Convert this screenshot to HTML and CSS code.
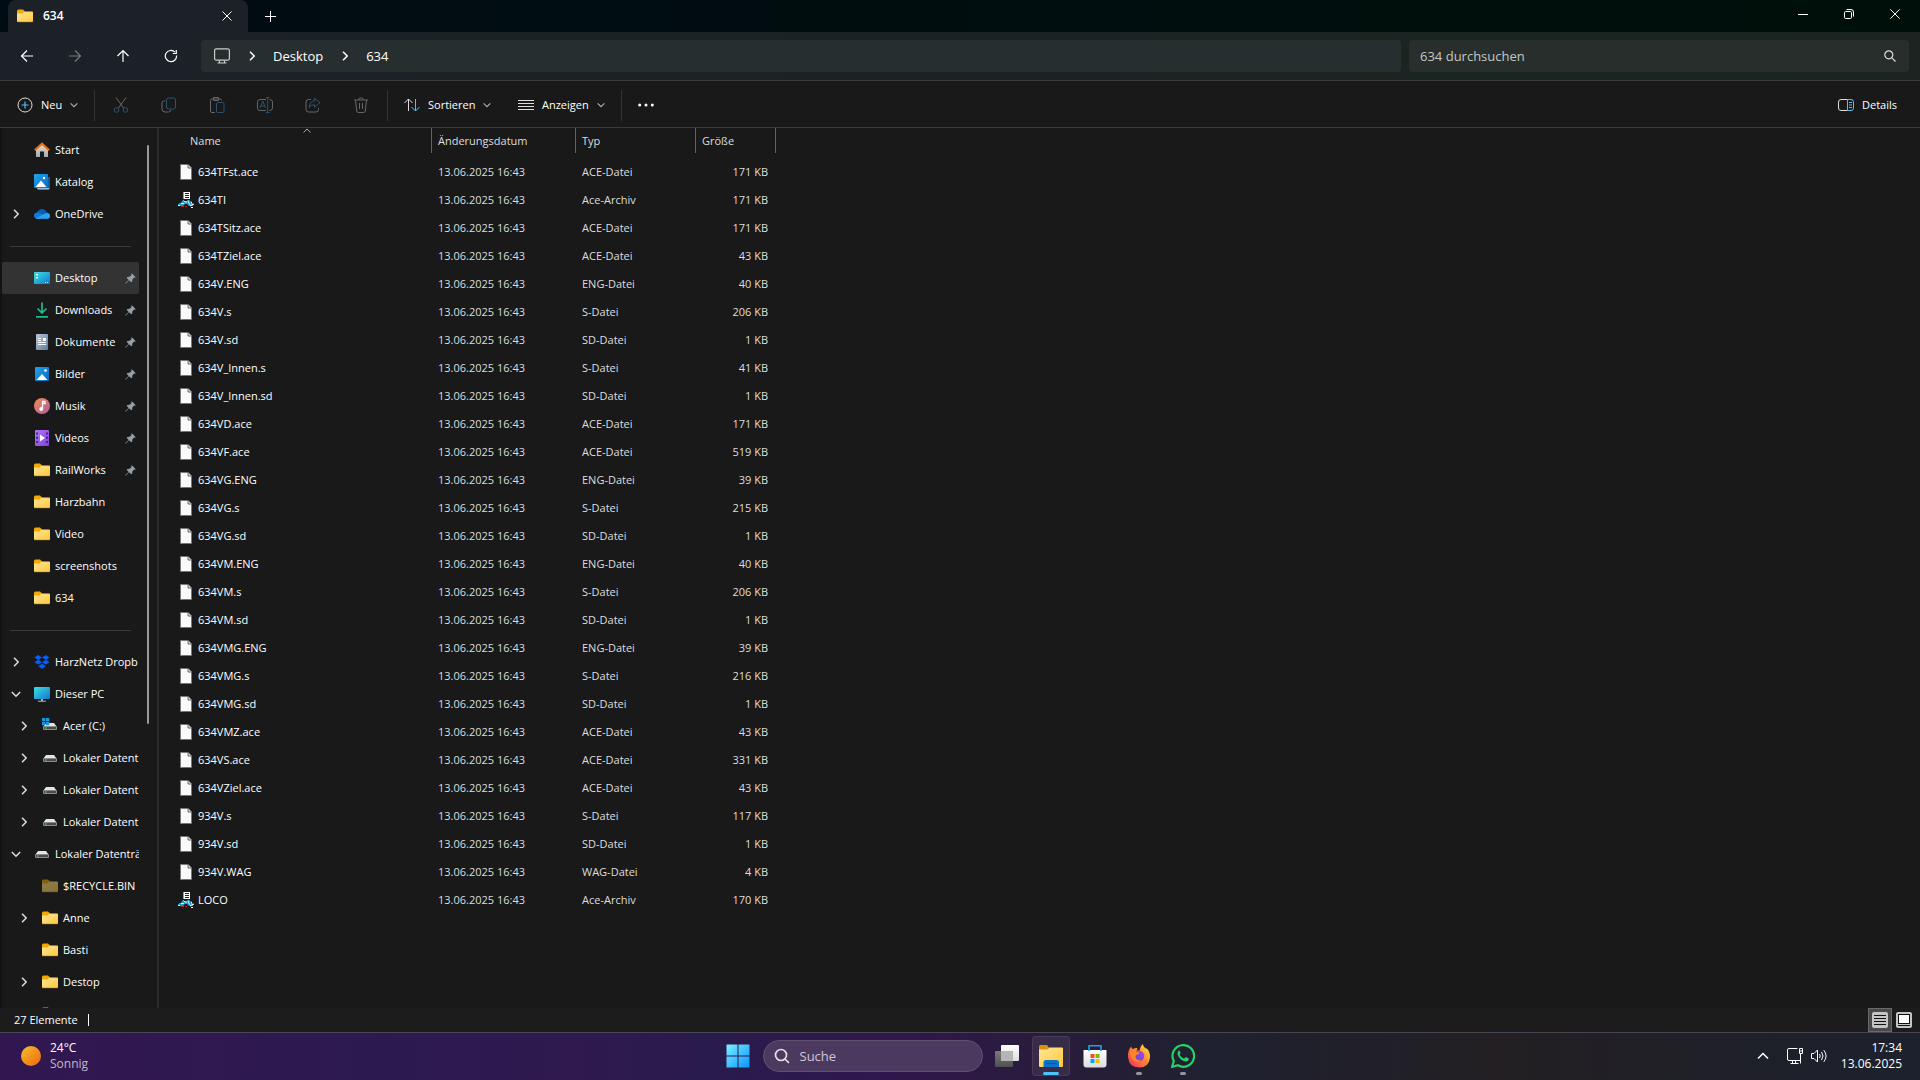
FILE: index.html
```html
<!DOCTYPE html>
<html lang="de">
<head>
<meta charset="UTF-8">
<title>634</title>
<link rel="stylesheet" href="styles.css">
</head>
<body>
<svg class="sprite" aria-hidden="true">
	<defs>
		<linearGradient id="gFolder" x1="0" y1="0" x2="1" y2="1"><stop offset="0" stop-color="#ffe69a"/><stop offset="1" stop-color="#ffc83a"/></linearGradient>
		<linearGradient id="gBlue" x1="0" y1="0" x2="1" y2="1"><stop offset="0" stop-color="#1fa5ee"/><stop offset="1" stop-color="#0a67bd"/></linearGradient>
		<linearGradient id="gCyan" x1="0" y1="0" x2="1" y2="1"><stop offset="0" stop-color="#3be0e8"/><stop offset="1" stop-color="#1277c9"/></linearGradient>
		<linearGradient id="gHouse" x1="0" y1="0" x2="0" y2="1"><stop offset="0" stop-color="#dedede"/><stop offset="1" stop-color="#a9a9a9"/></linearGradient>
		<linearGradient id="gDoc" x1="0" y1="0" x2="1" y2="1"><stop offset="0" stop-color="#b4c8dc"/><stop offset="1" stop-color="#5f7b9b"/></linearGradient>
		<linearGradient id="gMusic" x1="0" y1="0" x2="1" y2="1"><stop offset="0" stop-color="#f28d52"/><stop offset="1" stop-color="#b05aa0"/></linearGradient>
		<linearGradient id="gVideo" x1="0" y1="0" x2="1" y2="1"><stop offset="0" stop-color="#b477f5"/><stop offset="1" stop-color="#8141dd"/></linearGradient>
		<linearGradient id="gWin" x1="0" y1="0" x2="1" y2="1"><stop offset="0" stop-color="#7cf0ff"/><stop offset="1" stop-color="#0a93ff"/></linearGradient>
		<linearGradient id="gSun" x1="0" y1="0" x2="1" y2="1"><stop offset="0" stop-color="#f6c02f"/><stop offset="1" stop-color="#f0640c"/></linearGradient>
		<linearGradient id="gFox" x1="1" y1="0" x2="0" y2="1"><stop offset="0" stop-color="#fff04a"/><stop offset=".45" stop-color="#ff8a2c"/><stop offset="1" stop-color="#f0246c"/></linearGradient>
		<linearGradient id="gGlobe" x1="1" y1="0" x2="0" y2="1"><stop offset="0" stop-color="#b145f0"/><stop offset="1" stop-color="#5747c7"/></linearGradient>
		<linearGradient id="gWhite" x1="0" y1="0" x2="0" y2="1"><stop offset="0" stop-color="#ffffff"/><stop offset="1" stop-color="#dcdcdc"/></linearGradient>
		<linearGradient id="gGrey" x1="0" y1="0" x2="0" y2="1"><stop offset="0" stop-color="#7a7a7a"/><stop offset="1" stop-color="#505050"/></linearGradient>
	</defs>
	<symbol id="folder" viewBox="0 0 16 16"><path d="M0 3Q0 1.500 1.500 1.500H6L8 3.500V7H0z" fill="#f3a805"/><path d="M0 5.500h5.500L7.500 3.500H15q1 0 1 1V13q0 1-1 1H1q-1 0-1-1z" fill="url(#gFolder)"/><path d="M.5 13.700h15" stroke="#e5a92a" stroke-width=".8"/></symbol>
	<symbol id="file" viewBox="0 0 12 16"><path d="M.5.5H8L11.500 4V15.500H.5z" fill="#fafafa" stroke="#777" /><path d="M8 .5V4h3.500" fill="#ddd" stroke="#666"/></symbol>
	<symbol id="ace" viewBox="0 0 16 16"><path d="M6 0h6v7H6z" fill="#fff"/><path d="M5.500 0v7" stroke="#99a"/><path d="M7 1.500h4M7 3.500h4M7 5.500h4M7 7.500h1.500M10 7.500h1.500" stroke="#0b0bd8"/><path d="M5 8L2.500 11H1v1H0v2h5l2-2h2l2 2h4v-2h-1.500L11.500 8H9.500v1h-3z" fill="#1a9fd0"/><path d="M5.500 8.500l1.500 1.500h2M3 11.500h3M0 13.500h2M10 8.500l1.500 4" stroke="#d4f4ff" fill="none"/><path d="M3 14.500h3M7 14.500h2" stroke="#c11"/><path d="M13 9.500l1.500 3.500M12 14l4-2M13 15.500h2" stroke="#fff"/></symbol>
	<symbol id="home" viewBox="0 0 16 16"><path d="M2 7l6-5 6 5v8H10V9.500H6V15H2z" fill="url(#gHouse)"/><path d="M.8 8.300L8 1.700l7.200 6.600" fill="none" stroke="#e8700f" stroke-width="2.200"/></symbol>
	<symbol id="gallery" viewBox="0 0 16 16"><path d="M3 3h13v11q0 1.500-1.500 1.500H3z" fill="#0c59a4"/><path d="M3 14h12.500q-.5 1.500-1.500 1.500H4z" fill="#8fc0ee"/><rect width="14" height="14" rx="1" fill="url(#gBlue)"/><path d="M1.500 13L7 6.500 12.500 13z" fill="#fff"/><circle cx="10" cy="4" r="1.200" fill="#fff"/></symbol>
	<symbol id="picture" viewBox="0 0 16 16"><rect x="1" y="1" width="14" height="14" rx="1" fill="url(#gBlue)"/><path d="M2.500 14L8 8l5.500 6z" fill="#fff"/><circle cx="11.500" cy="4.500" r="1.300" fill="#fff"/></symbol>
	<symbol id="cloud" viewBox="0 0 16 16"><path d="M4 12.800Q0 12.500 0 9.500 0 7 3 6.500 4.500 3 8 3q3.500 0 5 3.500Q16 7 16 9.800q0 3-3 3z" fill="#0a5bb8"/><path d="M3 6.500Q5 6.200 7 7.500l6 3.300L3 12.700Q0 12 0 9.500 0 7 3 6.500z" fill="#1479d6"/><path d="M2 12.300L9 8.500q2-1.500 4.500-1.500Q16 7.500 16 9.800q0 3-3 3H4q-1.500 0-2-.5z" fill="#29a4ef"/></symbol>
	<symbol id="desktop" viewBox="0 0 16 16"><rect y="2" width="16" height="12" rx="1" fill="url(#gCyan)"/><path d="M2 4h2v1.500H2zM2 7h2v1.500H2z" fill="#fff"/><path d="M11 12.500h1M13 12.500h1" stroke="#bdf"/></symbol>
	<symbol id="download" viewBox="0 0 16 16"><path d="M8 .5v10M3.500 6.500L8 11l4.500-4.500M2 14.800h12" fill="none" stroke="#22b88d" stroke-width="1.700"/></symbol>
	<symbol id="document" viewBox="0 0 16 16"><rect x="2" width="12" height="16" rx="1" fill="url(#gDoc)"/><path d="M4 4.500h3M4 6.500h3M4 8.500h8M4 10.500h8" stroke="#fff"/><path d="M9 4h3v3H9z" fill="#fff"/></symbol>
	<symbol id="music" viewBox="0 0 16 16"><circle cx="8" cy="8" r="8" fill="url(#gMusic)"/><path d="M8.500 11V3.500h2.500v2H9" fill="none" stroke="#fff" stroke-width="1.300"/><circle cx="7.200" cy="11" r="1.900" fill="#fff"/></symbol>
	<symbol id="video" viewBox="0 0 16 16"><rect x="1" width="14" height="16" rx="1" fill="url(#gVideo)"/><path d="M3 2.500v12M13 2.500v12" stroke="#3d1f7a" stroke-width="1.800" stroke-dasharray="2 2.300"/><path d="M6 4.500v7L11 8z" fill="#fff"/></symbol>
	<symbol id="dropbox" viewBox="0 0 16 16"><path d="M4.200 1L8 3.400 4.200 5.800.4 3.400zM11.800 1l3.800 2.400-3.800 2.400L8 3.400zM4.200 5.800L8 8.200l-3.800 2.400L.4 8.200zM11.800 5.800l3.800 2.400-3.800 2.400L8 8.200zM8 9.800l3.800 2.400L8 14.800l-3.800-2.600z" fill="#0061fe"/></symbol>
	<symbol id="pc" viewBox="0 0 16 16"><rect y="1" width="16" height="12" rx="1" fill="url(#gCyan)"/><path d="M7 13h2v2H7zM4 14.700h8v1H4z" fill="#9fb4c4"/></symbol>
	<symbol id="drive" viewBox="0 0 16 16"><path d="M4 5h8l2.500 3.500h-13z" fill="#e4e4e4"/><rect x="1" y="8" width="14" height="4" rx="1" fill="#8b8b8b"/><path d="M2 9h12v2H2z" fill="#4a4a4a"/><circle cx="4" cy="10" r=".8" fill="#4be04b"/></symbol>
	<symbol id="windrive" viewBox="0 0 16 16"><path d="M4 5h8l2.500 3.500h-13z" fill="#e4e4e4"/><rect x="1" y="8" width="14" height="4" rx="1" fill="#8b8b8b"/><path d="M2 9h12v2H2z" fill="#4a4a4a"/><circle cx="4" cy="10" r=".8" fill="#4be04b"/><path d="M0 0h3.300v3.300H0zM4 0h3.300v3.300H4zM0 4h3.300v3.300H0zM4 4h3.300v3.300H4z" fill="#1696dd"/></symbol>
	<symbol id="pin" viewBox="0 0 12 12"><path d="M7.500.3L11.700 4.500 10.700 5.200 9.800 5 8 7.300 7.700 9.600 6.800 10.200 4.400 7.800 1 11.500.3 11.800.5 11 4 7.500 1.800 5.200 2.500 4.400 5 4.200 7.100 2.300 6.800 1.200z" fill="#969fa8"/></symbol>
	<symbol id="right" viewBox="0 0 10 10"><path d="M3 .8L7.200 5 3 9.200" fill="none" stroke="currentColor" stroke-width="1.500"/></symbol>
	<symbol id="down" viewBox="0 0 10 10"><path d="M.8 3L5 7.200 9.200 3" fill="none" stroke="currentColor" stroke-width="1.500"/></symbol>
</svg>

<header class="titlebar">
	<div class="tab">
		<svg class="ico"><use href="#folder"/></svg>
		<span class="tab-name">634</span>
		<button class="tab-close" aria-label="Tab schließen"><svg width="10" height="10" viewBox="0 0 10 10"><path d="M.5.5l9 9M9.500.5l-9 9" stroke="#fff"/></svg></button>
	</div>
	<button class="new-tab" aria-label="Neuer Tab"><svg width="11" height="11" viewBox="0 0 11 11"><path d="M5.500 0v11M0 5.500h11" stroke="#fff"/></svg></button>
	<div class="win-btns">
		<button aria-label="Minimieren"><svg width="10" height="10" viewBox="0 0 10 10"><path d="M0 5.500h10" stroke="#fff"/></svg></button>
		<button aria-label="Verkleinern"><svg width="10" height="10" viewBox="0 0 10 10" fill="none" stroke="#fff"><rect x=".5" y="2.500" width="7" height="7" rx="1.200"/><path d="M2.500.5H7q2.500 0 2.500 2.500v4.500"/></svg></button>
		<button aria-label="Schließen"><svg width="10" height="10" viewBox="0 0 10 10"><path d="M.3.3l9.400 9.400M9.700.3L.3 9.700" stroke="#fff"/></svg></button>
	</div>
</header>

<nav class="navbar">
	<div class="nav-btns">
		<button aria-label="Zurück"><svg width="14" height="14" viewBox="0 0 14 14"><path d="M13 7H1.500M7 1.500L1.500 7 7 12.500"/></svg></button>
		<button aria-label="Vorwärts" disabled><svg width="14" height="14" viewBox="0 0 14 14"><path d="M1 7h11.500M7 1.500L12.500 7 7 12.500"/></svg></button>
		<button aria-label="Nach oben"><svg width="14" height="14" viewBox="0 0 14 14"><path d="M7 13V1.500M1.500 7L7 1.500 12.500 7"/></svg></button>
		<button aria-label="Aktualisieren"><svg width="14" height="14" viewBox="0 0 14 14"><path d="M12.500 6.500A5.600 5.600 0 1 1 11 3.200M12.300 1v3.500H8.800"/></svg></button>
	</div>
	<div class="address">
		<svg width="16" height="16" viewBox="0 0 16 16" fill="none" stroke="#ccc" stroke-width="1.200"><rect x=".6" y=".8" width="14.800" height="11.400" rx="1.800"/><path d="M5.500 12.500v2M10.500 12.500v2M3.500 15h9"/></svg>
		<svg class="chev"><use href="#right"/></svg>
		<a href="#">Desktop</a>
		<svg class="chev"><use href="#right"/></svg>
		<a href="#">634</a>
	</div>
	<div class="search">
		<input type="text" placeholder="634 durchsuchen" aria-label="634 durchsuchen">
		<svg width="12" height="12" viewBox="0 0 12 12" fill="none" stroke="#ddd" stroke-width="1.200"><circle cx="4.800" cy="4.800" r="4"/><path d="M7.700 7.700l3.800 3.800"/></svg>
	</div>
</nav>

<div class="toolbar">
	<button class="tool tool-new"><svg width="16" height="16" viewBox="0 0 16 16" fill="none"><circle cx="8" cy="8" r="7" stroke="#ddd"/><path d="M8 4.500v7M4.500 8h7" stroke="#4cc2ff" stroke-width="1.200"/></svg>Neu<svg class="mini"><use href="#down"/></svg></button>
	<span class="divider"></span>
	<div class="edit-btns">
		<button aria-label="Ausschneiden" disabled><svg viewBox="0 0 16 16"><path d="M3 .5l7.500 10.500M13 .5L5.500 11" stroke="#666"/><circle cx="3.500" cy="13" r="2.300" stroke="#2a5570"/><circle cx="12.500" cy="13" r="2.300" stroke="#2a5570"/></svg></button>
		<button aria-label="Kopieren" disabled><svg viewBox="0 0 16 16"><path d="M4 4H2.500Q1 4 1 6v6q0 3 3 3h3.500q2 0 2.500-2" stroke="#666"/><rect x="5.500" y="1" width="9" height="11" rx="2" stroke="#2a5570"/></svg></button>
		<button aria-label="Einfügen" disabled><svg viewBox="0 0 16 16"><path d="M6 15.500H3Q1.500 15.500 1.500 14V3.500Q1.500 2 3 2h8q1.500 0 1.500 1.500M4.500.5h5v3h-5z" stroke="#666"/><rect x="7.500" y="5.500" width="7.500" height="10" rx="1.200" stroke="#2a5570"/></svg></button>
		<button aria-label="Umbenennen" disabled><svg viewBox="0 0 16 16"><path d="M9 2.500H3Q.5 2.500.5 5v6q0 2.500 2.500 2.500h6M12.500 2.500q3 0 3 2.500v6q0 2.500-3 2.500" stroke="#666"/><path d="M3 11l2.800-7 2.700 7M4 9h3.600M9 .5h3.500M9 15.500h3.500M10.700.5v15" stroke="#2a5570"/></svg></button>
		<button aria-label="Freigeben" disabled><svg viewBox="0 0 16 16"><path d="M6 2.500H3.500Q1 2.500 1 5v7.500Q1 15 3.500 15H11q2.500 0 2.500-2.500V11" stroke="#666"/><path d="M9.500 1.200L15 5.700 9.500 10.200V7.700Q6 7.500 4 10.500 4.500 4.500 9.500 3.700z" stroke="#2a5570"/></svg></button>
		<button aria-label="Löschen" disabled><svg viewBox="0 0 16 16"><path d="M1 3h14M5.500 3Q5.500.8 8 .8T10.500 3M2.500 3l1.200 11q.2 1.500 1.500 1.500h5.600q1.300 0 1.500-1.500l1.200-11M6.500 6v6M9.500 6v6" stroke="#666"/></svg></button>
	</div>
	<span class="divider"></span>
	<button class="tool tool-sort"><svg width="16" height="16" viewBox="0 0 16 16" fill="none"><path d="M4.500 14V2M.5 6l4-4 4 4" stroke="#ddd"/><path d="M11.500 2v12M7.500 10l4 4 4-4" stroke="#4cc2ff"/></svg>Sortieren<svg class="mini"><use href="#down"/></svg></button>
	<button class="tool tool-view"><svg width="16" height="16" viewBox="0 0 16 16"><path d="M0 3.500h16M0 6.500h16M0 9.500h16M0 12.500h16" stroke="#ddd"/></svg>Anzeigen<svg class="mini"><use href="#down"/></svg></button>
	<span class="divider"></span>
	<button class="tool tool-more" aria-label="Mehr anzeigen"><svg width="16" height="16" viewBox="0 0 16 16" fill="#fff"><circle cx="1.700" cy="8" r="1.500"/><circle cx="8" cy="8" r="1.500"/><circle cx="14.300" cy="8" r="1.500"/></svg></button>
	<button class="tool tool-details"><svg width="16" height="16" viewBox="0 0 16 16" fill="none"><path d="M9.500 2.500H3Q.5 2.500.5 5v6q0 2.500 2.500 2.500h6.500" stroke="#ddd"/><path d="M9.500 2.500H13q2.500 0 2.500 2.500v6q0 2.500-2.500 2.500H9.500zM11 5.500h3M11 8h3M11 10.500h3" stroke="#4cc2ff"/></svg>Details</button>
</div>

<main class="content">
	<aside class="sidebar">
		<ul class="tree">
			<li><a href="#"><svg class="ico"><use href="#home"/></svg>Start</a></li>
			<li><a href="#"><svg class="ico"><use href="#gallery"/></svg>Katalog</a></li>
			<li><button aria-label="Erweitern"><svg><use href="#right"/></svg></button><a href="#"><svg class="ico"><use href="#cloud"/></svg>OneDrive</a></li>
			<li class="line"></li>
			<li class="on"><a href="#"><svg class="ico"><use href="#desktop"/></svg>Desktop</a><svg class="pin"><use href="#pin"/></svg></li>
			<li><a href="#"><svg class="ico"><use href="#download"/></svg>Downloads</a><svg class="pin"><use href="#pin"/></svg></li>
			<li><a href="#"><svg class="ico"><use href="#document"/></svg>Dokumente</a><svg class="pin"><use href="#pin"/></svg></li>
			<li><a href="#"><svg class="ico"><use href="#picture"/></svg>Bilder</a><svg class="pin"><use href="#pin"/></svg></li>
			<li><a href="#"><svg class="ico"><use href="#music"/></svg>Musik</a><svg class="pin"><use href="#pin"/></svg></li>
			<li><a href="#"><svg class="ico"><use href="#video"/></svg>Videos</a><svg class="pin"><use href="#pin"/></svg></li>
			<li><a href="#"><svg class="ico"><use href="#folder"/></svg>RailWorks</a><svg class="pin"><use href="#pin"/></svg></li>
			<li><a href="#"><svg class="ico"><use href="#folder"/></svg>Harzbahn</a></li>
			<li><a href="#"><svg class="ico"><use href="#folder"/></svg>Video</a></li>
			<li><a href="#"><svg class="ico"><use href="#folder"/></svg>screenshots</a></li>
			<li><a href="#"><svg class="ico"><use href="#folder"/></svg>634</a></li>
			<li class="line"></li>
			<li><button aria-label="Erweitern"><svg><use href="#right"/></svg></button><a href="#"><svg class="ico"><use href="#dropbox"/></svg>HarzNetz Dropb</a></li>
			<li><button aria-label="Reduzieren"><svg><use href="#down"/></svg></button><a href="#"><svg class="ico"><use href="#pc"/></svg>Dieser PC</a></li>
			<li class="sub"><button aria-label="Erweitern"><svg><use href="#right"/></svg></button><a href="#"><svg class="ico"><use href="#windrive"/></svg>Acer (C:)</a></li>
			<li class="sub"><button aria-label="Erweitern"><svg><use href="#right"/></svg></button><a href="#"><svg class="ico"><use href="#drive"/></svg>Lokaler Datent</a></li>
			<li class="sub"><button aria-label="Erweitern"><svg><use href="#right"/></svg></button><a href="#"><svg class="ico"><use href="#drive"/></svg>Lokaler Datent</a></li>
			<li class="sub"><button aria-label="Erweitern"><svg><use href="#right"/></svg></button><a href="#"><svg class="ico"><use href="#drive"/></svg>Lokaler Datent</a></li>
			<li><button aria-label="Reduzieren"><svg><use href="#down"/></svg></button><a href="#"><svg class="ico"><use href="#drive"/></svg>Lokaler Datenträ</a></li>
			<li class="sub"><a href="#"><svg class="ico dim"><use href="#folder"/></svg>$RECYCLE.BIN</a></li>
			<li class="sub"><button aria-label="Erweitern"><svg><use href="#right"/></svg></button><a href="#"><svg class="ico"><use href="#folder"/></svg>Anne</a></li>
			<li class="sub"><a href="#"><svg class="ico"><use href="#folder"/></svg>Basti</a></li>
			<li class="sub"><button aria-label="Erweitern"><svg><use href="#right"/></svg></button><a href="#"><svg class="ico"><use href="#folder"/></svg>Destop</a></li>
			<li class="sub"><a href="#" aria-label="Ordner"><svg class="ico"><use href="#folder"/></svg></a></li>
		</ul>
		<div class="scroll"><div class="thumb"></div></div>
	</aside>

	<section class="files">
		<table>
			<colgroup><col class="c-name"><col class="c-date"><col class="c-type"><col class="c-size"></colgroup>
			<thead>
				<tr>
					<th class="name"><div>Name<svg class="caret" width="8" height="5" viewBox="0 0 8 5"><path d="M.5 4.500L4 1l3.500 3.500" fill="none" stroke="#aaa"/></svg></div></th>
					<th><div>Änderungsdatum</div></th>
					<th><div>Typ</div></th>
					<th><div>Größe</div></th>
				</tr>
			</thead>
			<tbody>
				<tr><td><svg><use href="#file"/></svg>634TFst.ace</td><td>13.06.2025 16:43</td><td>ACE-Datei</td><td>171 KB</td></tr>
				<tr><td><svg class="wide"><use href="#ace"/></svg>634TI</td><td>13.06.2025 16:43</td><td>Ace-Archiv</td><td>171 KB</td></tr>
				<tr><td><svg><use href="#file"/></svg>634TSitz.ace</td><td>13.06.2025 16:43</td><td>ACE-Datei</td><td>171 KB</td></tr>
				<tr><td><svg><use href="#file"/></svg>634TZiel.ace</td><td>13.06.2025 16:43</td><td>ACE-Datei</td><td>43 KB</td></tr>
				<tr><td><svg><use href="#file"/></svg>634V.ENG</td><td>13.06.2025 16:43</td><td>ENG-Datei</td><td>40 KB</td></tr>
				<tr><td><svg><use href="#file"/></svg>634V.s</td><td>13.06.2025 16:43</td><td>S-Datei</td><td>206 KB</td></tr>
				<tr><td><svg><use href="#file"/></svg>634V.sd</td><td>13.06.2025 16:43</td><td>SD-Datei</td><td>1 KB</td></tr>
				<tr><td><svg><use href="#file"/></svg>634V_Innen.s</td><td>13.06.2025 16:43</td><td>S-Datei</td><td>41 KB</td></tr>
				<tr><td><svg><use href="#file"/></svg>634V_Innen.sd</td><td>13.06.2025 16:43</td><td>SD-Datei</td><td>1 KB</td></tr>
				<tr><td><svg><use href="#file"/></svg>634VD.ace</td><td>13.06.2025 16:43</td><td>ACE-Datei</td><td>171 KB</td></tr>
				<tr><td><svg><use href="#file"/></svg>634VF.ace</td><td>13.06.2025 16:43</td><td>ACE-Datei</td><td>519 KB</td></tr>
				<tr><td><svg><use href="#file"/></svg>634VG.ENG</td><td>13.06.2025 16:43</td><td>ENG-Datei</td><td>39 KB</td></tr>
				<tr><td><svg><use href="#file"/></svg>634VG.s</td><td>13.06.2025 16:43</td><td>S-Datei</td><td>215 KB</td></tr>
				<tr><td><svg><use href="#file"/></svg>634VG.sd</td><td>13.06.2025 16:43</td><td>SD-Datei</td><td>1 KB</td></tr>
				<tr><td><svg><use href="#file"/></svg>634VM.ENG</td><td>13.06.2025 16:43</td><td>ENG-Datei</td><td>40 KB</td></tr>
				<tr><td><svg><use href="#file"/></svg>634VM.s</td><td>13.06.2025 16:43</td><td>S-Datei</td><td>206 KB</td></tr>
				<tr><td><svg><use href="#file"/></svg>634VM.sd</td><td>13.06.2025 16:43</td><td>SD-Datei</td><td>1 KB</td></tr>
				<tr><td><svg><use href="#file"/></svg>634VMG.ENG</td><td>13.06.2025 16:43</td><td>ENG-Datei</td><td>39 KB</td></tr>
				<tr><td><svg><use href="#file"/></svg>634VMG.s</td><td>13.06.2025 16:43</td><td>S-Datei</td><td>216 KB</td></tr>
				<tr><td><svg><use href="#file"/></svg>634VMG.sd</td><td>13.06.2025 16:43</td><td>SD-Datei</td><td>1 KB</td></tr>
				<tr><td><svg><use href="#file"/></svg>634VMZ.ace</td><td>13.06.2025 16:43</td><td>ACE-Datei</td><td>43 KB</td></tr>
				<tr><td><svg><use href="#file"/></svg>634VS.ace</td><td>13.06.2025 16:43</td><td>ACE-Datei</td><td>331 KB</td></tr>
				<tr><td><svg><use href="#file"/></svg>634VZiel.ace</td><td>13.06.2025 16:43</td><td>ACE-Datei</td><td>43 KB</td></tr>
				<tr><td><svg><use href="#file"/></svg>934V.s</td><td>13.06.2025 16:43</td><td>S-Datei</td><td>117 KB</td></tr>
				<tr><td><svg><use href="#file"/></svg>934V.sd</td><td>13.06.2025 16:43</td><td>SD-Datei</td><td>1 KB</td></tr>
				<tr><td><svg><use href="#file"/></svg>934V.WAG</td><td>13.06.2025 16:43</td><td>WAG-Datei</td><td>4 KB</td></tr>
				<tr><td><svg class="wide"><use href="#ace"/></svg>LOCO</td><td>13.06.2025 16:43</td><td>Ace-Archiv</td><td>170 KB</td></tr>
			</tbody>
		</table>
	</section>
</main>

<div class="status">
	<span class="count">27 Elemente</span>
	<div class="views">
		<button class="on" aria-label="Details"><svg width="16" height="16" viewBox="0 0 16 16"><rect width="16" height="16" rx="2" fill="#c4c4c4"/><path d="M2 3.500h12M2 6.500h12M2 9.500h12M2 12.500h12" stroke="#111"/></svg></button>
		<button aria-label="Große Symbole"><svg width="16" height="16" viewBox="0 0 16 16"><rect width="16" height="16" rx="2" fill="#c4c4c4"/><rect x="2.500" y="2.500" width="11" height="9" fill="#fff" stroke="#111"/><path d="M2 13.500h12" stroke="#111"/></svg></button>
	</div>
</div>

<footer class="taskbar">
	<button class="weather">
		<svg width="20" height="20" viewBox="0 0 20 20"><circle cx="10" cy="10" r="10" fill="url(#gSun)"/></svg>
		<span>24°C<br><em>Sonnig</em></span>
	</button>
	<div class="apps">
		<button aria-label="Start"><svg width="24" height="24" viewBox="0 0 24 24"><path d="M.5 1q0-.5.5-.5h10.500v11H.5zM12.500.5H23q.5 0 .5.5v10.500h-11zM.5 12.500h11v11H1q-.5 0-.5-.5zM12.500 12.500h11V23q0 .5-.5.5H12.500z" fill="url(#gWin)"/></svg></button>
		<label class="find">
			<svg width="16" height="16" viewBox="0 0 16 16" fill="none" stroke="#e4e0e8" stroke-width="1.700"><circle cx="7" cy="7" r="5.500"/><path d="M11 11l4 4"/></svg>
			<input type="text" placeholder="Suche" aria-label="Suche">
		</label>
		<button aria-label="Aktive Anwendungen"><svg width="24" height="24" viewBox="0 0 24 24"><rect y="7" width="18" height="16" rx="1" fill="url(#gGrey)"/><rect x="6" y="1" width="18" height="16" rx="1" fill="url(#gWhite)"/><path d="M6 7h12v10H6z" fill="#b5b5b5"/></svg></button>
		<button class="active" aria-label="Explorer"><svg width="24" height="24" viewBox="0 0 24 24"><path d="M0 2.500Q0 1 1.500 1H8l2 2.500L8 7H0z" fill="#d9930a"/><path d="M0 5.500h8l2.500-2H23q1 0 1 1V22q0 1-1 1H1q-1 0-1-1z" fill="url(#gFolder)"/><path d="M4.500 23v-4.500Q4.500 16 7 16h10.500q2.500 0 2.500 2.500V23z" fill="#0c74c8"/><path d="M7 19.500h10.500" stroke="#0a559c" stroke-width="1.200"/></svg><i></i></button>
		<button aria-label="Microsoft Store"><svg width="24" height="24" viewBox="0 0 24 24"><path d="M.5 6h23v14.500q0 3-3 3h-17q-3 0-3-3z" fill="url(#gWhite)"/><path d="M6 7V1.700h12V7" fill="none" stroke="#1ba1ec" stroke-width="1.600"/><path d="M7.500 10h4v4h-4z" fill="#f25022"/><path d="M12.500 10h4v4h-4z" fill="#7fba00"/><path d="M7.500 15h4v4h-4z" fill="#00a4ef"/><path d="M12.500 15h4v4h-4z" fill="#ffb900"/></svg></button>
		<button class="open" aria-label="Firefox"><svg width="24" height="24" viewBox="0 0 24 24"><path d="M1 13Q.5 7 4 2.500q.5 2 2 2.500 2-1.500 4.500-1L9.500 6.500h3Q13 3 15.500 0q1.500 4 4 5 0-1 0-1 4 4 3.500 9.500Q22 23.500 12 23.500T1 13z" fill="url(#gFox)"/><circle cx="12" cy="12" r="5.300" fill="url(#gGlobe)"/><path d="M3 7.500q3-2 6.500.5l3 .5q0 1.500-3.500 2.500-1 2 0 3.500 2.500 2.500 5.500 1-3 4-7.500 1.500Q3 14 3 7.500z" fill="#ff8426"/></svg><i></i></button>
		<button class="open" aria-label="WhatsApp"><svg width="24" height="24" viewBox="0 0 24 24"><path d="M1.200 22.800L2.800 17A10.800 10.800 0 1 1 7 21.300z" fill="none" stroke="#25d366" stroke-width="2.200"/><path d="M8.500 6.500q-1 0-1.700 1.200-1 2 .7 4.800 3 4.500 7 5 3 .3 3.300-2.300 0-.7-.5-.9l-2.200-1q-.6-.2-1 .3l-1 1.200q-3-1-4.500-4l.9-1.200q.2-.4 0-.8l-.8-2q-.1-.3-.2-.3z" fill="#25d366"/></svg><i></i></button>
	</div>
	<div class="tray">
		<button aria-label="Ausgeblendete Symbole"><svg width="12" height="8" viewBox="0 0 12 8"><path d="M1 6.500l5-5 5 5" fill="none" stroke="#fff" stroke-width="1.500"/></svg></button>
		<button class="net" aria-label="Netzwerk und Ton">
			<svg width="16" height="16" viewBox="0 0 16 16" fill="none" stroke="#fff"><path d="M10.500.5H2Q.5.5.5 2v9q0 1.500 1.500 1.500H13M5.500 12.500v3M8.500 12.500v3M3.500 15.500h8M12.500.5h3v5h-3zM12 3h4M13.500 5.500v10"/></svg>
			<svg width="16" height="16" viewBox="0 0 16 16" fill="none" stroke="#fff"><path d="M.5 5.500h2.500L6.500 2v12L3 10.500H.5zM8.500 6q1.500 2 0 4M10.500 4q3 4 0 8M12.800 2.200q4.500 5.800 0 11.600"/></svg>
		</button>
		<button class="clock">17:34<br>13.06.2025</button>
	</div>
</footer>
</body>
</html>
```
FILE: styles.css
```css
*{margin:0;padding:0;box-sizing:border-box;}
body{
	display:flex;
	flex-direction:column;
	height:100vh;
	overflow:hidden;
	background:#191919;
	color:#fff;
	font:11px/16px "Open Sans","Noto Sans",sans-serif;
}
a{
	color:inherit;
	text-decoration:none;
}
ul{list-style:none;}
button{
	display:flex;
	flex:none;
	align-items:center;
	justify-content:center;
	background:none;
	border:0;
	color:inherit;
	font:inherit;
}
input{
	background:none;
	border:0;
	outline:0;
	color:#fff;
	font:inherit;
}
svg{
	display:block;
	flex:none;
}
.sprite{
	position:absolute;
	width:0;
	height:0;
}
.ico{
	width:16px;
	height:16px;
}

/* Titelleiste */
.titlebar{
	display:flex;
	flex:none;
	height:32px;
	padding:0 2px 0 8px;
	background:linear-gradient(90deg,#000c14,#000f0a);
}
.tab{
	display:flex;
	align-items:center;
	width:240px;
	padding:0 6px 0 9px;
	border-radius:8px 8px 0 0;
	background:#1b2127;
}
.tab-name{
	flex:1;
	margin-left:10px;
	font-weight:600;
	font-size:12px;
}
.tab-close{width:30px;height:24px;}
.new-tab{width:45px;}
.win-btns{
	display:flex;
	margin-left:auto;
}
.win-btns button{width:46px;height:28px;}

/* Adressleiste */
.navbar{
	display:grid;
	grid-template-columns:193px 12fr 5fr;
	gap:8px;
	flex:none;
	align-items:center;
	height:48px;
	padding-right:11px;
	background:linear-gradient(90deg,#1b2128,#1a2422 70%,#1b2420);
	font-size:13px;
}
.nav-btns{
	display:flex;
	padding-left:3px;
}
.nav-btns button{width:48px;height:32px;}
.nav-btns path{
	fill:none;
	stroke:#fff;
	stroke-width:1.2;
}
.nav-btns button:disabled{opacity:.4;}
.address,.search{
	display:flex;
	align-items:center;
	height:32px;
	border-radius:4px;
	background:#272e30;
}
.address{padding-left:13px;}
.address .chev{
	width:10px;
	height:10px;
	margin:0 16px 0 17px;
}
.search{
	padding:0 13px 0 11px;
	background:#272e2c;
}
.search input{flex:1;}
.search input::placeholder{color:#c4c8c6;opacity:1;}

/* Befehlsleiste */
.toolbar{
	display:flex;
	flex:none;
	align-items:center;
	height:48px;
	padding:2px 23px 0 17px;
	border-top:1px solid #3a3a3a;
	border-bottom:1px solid #3a3a3a;
}
.tool{gap:8px;height:32px;}
.mini{
	width:8px;
	height:8px;
	color:#aaa;
}
.divider{
	width:1px;
	height:31px;
	background:#333;
}
.tool-new{width:61px;margin-right:16px;justify-content:flex-start;}
.edit-btns{
	display:flex;
	padding:0 2px;
}
.edit-btns button{width:48px;height:32px;}
.edit-btns svg{
	width:16px;
	height:16px;
	fill:none;
}
.tool-sort{margin-left:16px;width:86px;justify-content:flex-start;}
.tool-view{margin:0 16px 0 28px;width:87px;justify-content:flex-start;}
.tool-more{margin-left:16px;}
.tool-details{margin-left:auto;}

.content{
	display:flex;
	flex:1;
	min-height:0;
}

/* Navigationsbereich */
.sidebar{
	display:flex;
	flex:none;
	width:159px;
	border-left:2px solid #131313;
	border-right:2px solid #2a2a2a;
}
.tree{
	width:137px;
	padding-top:6px;
	overflow:hidden;
}
.tree li{
	display:flex;
	align-items:center;
	position:relative;
	height:32px;
	padding-left:32px;
	white-space:nowrap;
}
.tree .sub{padding-left:40px;}
.tree .on{
	border-radius:2px;
	background:#333;
}
.tree a{
	display:flex;
	align-items:center;
	gap:5px;
}
.tree li button{
	width:20px;
	height:20px;
	margin:0 8px 0 -28px;
}
.tree button svg{
	width:10px;
	height:10px;
	color:#ddd;
}
.tree .pin{
	position:absolute;
	right:3px;
	width:11px;
	height:11px;
}
.tree .line::before{
	content:"";
	width:121px;
	height:1px;
	margin-left:-24px;
	background:#3a3a3a;
}
.dim{opacity:.5;}
.scroll{padding:17px 0 0 8px;}
.thumb{
	width:2px;
	height:579px;
	border-radius:1px;
	background:#9a9a9a;
}

/* Dateiliste */
.files{
	flex:1;
	padding-left:1px;
	overflow:hidden;
}
table{
	width:616px;
	table-layout:fixed;
	border-collapse:collapse;
}
.c-name{width:272px;}
.c-date{width:144px;}
.c-type{width:120px;}
.c-size{width:80px;}
th{
	height:30px;
	font-weight:400;
	text-align:left;
	vertical-align:top;
	color:#dedede;
}
th div{
	position:relative;
	height:25px;
	padding:5px 0 0 6px;
	border-right:1px solid #636363;
}
.name div{padding-left:30px;}
.caret{
	position:absolute;
	top:0;
	left:143px;
}
td{
	height:28px;
	padding-left:6px;
	color:#dedede;
	white-space:nowrap;
}
td:first-child{
	display:flex;
	align-items:center;
	padding-left:20px;
	gap:6px;
	color:#fff;
}
td:last-child{
	padding:0 8px 0 0;
	text-align:right;
}
td svg{
	width:12px;
	height:16px;
}
td .wide{
	width:16px;
	margin:0 -2px;
}

/* Statusleiste */
.status{
	display:flex;
	flex:none;
	justify-content:space-between;
	align-items:center;
	height:24px;
	padding:0 4px 0 14px;
	background:#1c1c1c;
}
.count{
	padding-right:10px;
	line-height:12px;
	border-right:1px solid #fff;
}
.views{display:flex;}
.views button{width:24px;height:24px;}
.views .on{
	border:1px solid #6a6a6a;
	background:#4a4a4a;
}

/* Taskleiste */
.taskbar{
	display:grid;
	grid-template-columns:1fr auto 1fr;
	flex:none;
	height:48px;
	padding-bottom:2px;
	border-top:1px solid #4a4453;
	background:linear-gradient(90deg,#32174f,#2c1a4f 20%,#2f194f 30%,#291b4c 37%,#30174b 47%,#251e35 58%,#1f2130 63%,#231f23 78%,#1c212d);
}
.weather{
	justify-self:start;
	gap:9px;
	padding-left:21px;
	text-align:left;
}
.weather em{
	font-style:normal;
	color:#c0b8c8;
}
.apps{
	display:flex;
	align-items:center;
}
.apps button{
	position:relative;
	width:44px;
	height:40px;
}
.apps .active::before{
	content:"";
	position:absolute;
	inset:0 3px;
	border:1px solid rgba(255,255,255,.08);
	border-radius:4px;
	background:rgba(255,255,255,.07);
}
.apps svg{position:relative;}
.apps i{
	position:absolute;
	bottom:1px;
	left:19px;
	width:6px;
	height:3px;
	border-radius:2px;
	background:#98949e;
}
.apps .active i{
	left:14px;
	width:16px;
	background:#4cc2ff;
}
.find{
	display:flex;
	align-items:center;
	gap:10px;
	width:220px;
	height:32px;
	margin:0 2px 0 3px;
	padding-left:10px;
	border:1px solid #62506f;
	border-radius:16px;
	background:#4b395f;
	font-size:13px;
}
.find input{width:150px;}
.find input::placeholder{color:#cfc8d6;opacity:1;}
.tray{
	display:flex;
	justify-self:end;
	align-items:center;
	padding-right:18px;
}
.net{
	gap:8px;
	margin:0 14px 0 18px;
}
.weather,.clock{font-size:12px;}
.clock{
	display:block;
	text-align:right;
}
```
